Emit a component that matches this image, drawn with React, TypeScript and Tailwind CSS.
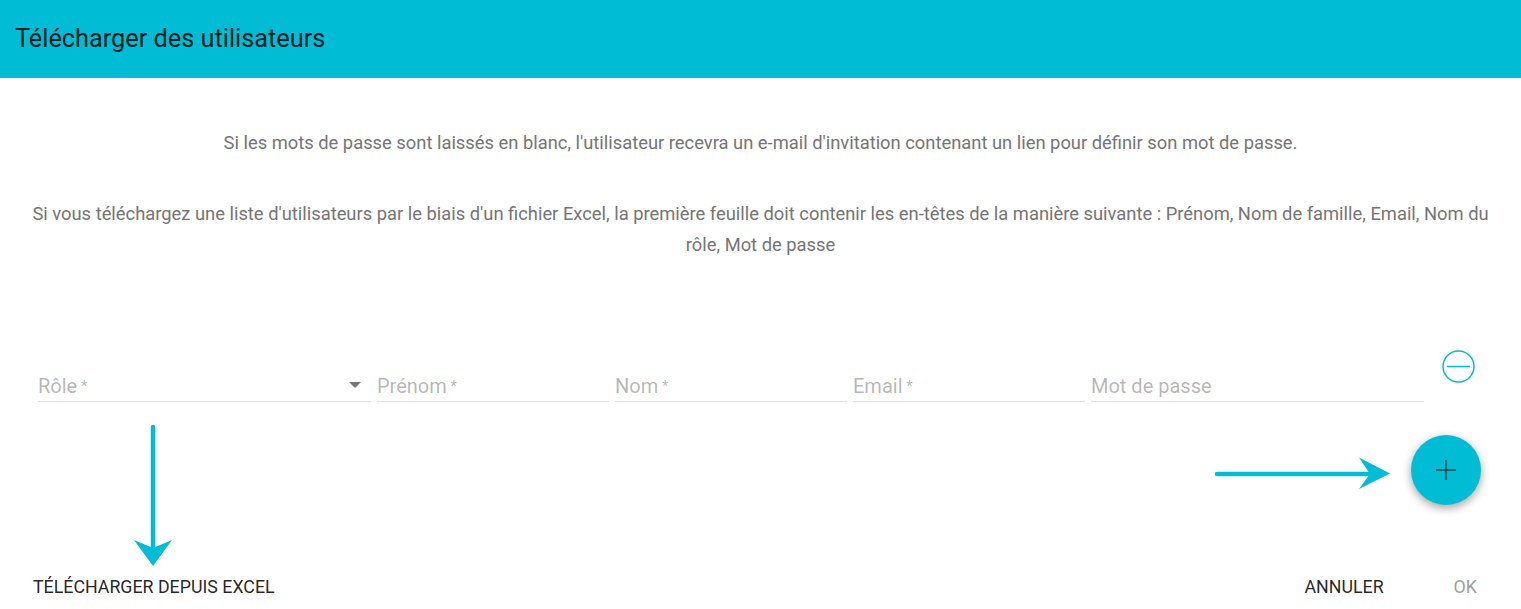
import React from 'react';

const fields = [
  { label: 'Rôle', required: true, w: 'w-[333px]', select: true },
  { label: 'Prénom', required: true, w: 'w-[232px]' },
  { label: 'Nom', required: true, w: 'w-[232px]' },
  { label: 'Email', required: true, w: 'w-[232px]' },
  { label: 'Mot de passe', required: false, w: 'w-[333px]' },
];

const App = () => {
  return (
    <div className="relative w-[1521px] h-[609px] overflow-hidden bg-white font-['Roboto',sans-serif]">
      <div className="h-[78px] bg-[#00bcd4] px-[15px] flex items-center">
        <h1 className="text-[25.3px] text-[rgba(0,0,0,0.87)] font-normal">Télécharger des utilisateurs</h1>
      </div>

      <div className="px-[24px] text-center text-[18.35px] leading-[31px] text-[#757575]">
        <p className="pt-[49px]">
          Si les mots de passe sont laissés en blanc, l'utilisateur recevra un e-mail d'invitation contenant un lien pour définir son mot de passe.
        </p>
        <p className="mt-[40px]">
          Si vous téléchargez une liste d'utilisateurs par le biais d'un fichier Excel, la première feuille doit contenir les en-têtes de la manière suivante : Prénom, Nom de famille, Email, Nom du rôle, Mot de passe
        </p>
      </div>

      <div className="mt-[88px] pl-[38px] flex items-start gap-[6px]">
        {fields.map((f) => (
          <div key={f.label} className={`${f.w} h-[54px] border-b border-[#e0e0e0] flex items-end justify-between pb-[3px]`}>
            <span className="text-[20px] leading-[24px] text-[rgba(0,0,0,0.3)]">
              {f.label}
              {f.required && <span className="text-[15px] align-top"> *</span>}
            </span>
            {f.select && (
              <svg width="12" height="6" viewBox="0 0 12 6" className="mb-[10px] mr-[10px]">
                <path d="M0 0 L12 0 L6 6 Z" fill="#757575" />
              </svg>
            )}
          </div>
        ))}
        <button className="ml-[12px] mt-[2px] w-[33px] h-[33px]">
          <svg width="33" height="33" viewBox="0 0 33 33">
            <circle cx="16.5" cy="16.5" r="15.5" fill="none" stroke="#00bcd4" strokeWidth="1.5" />
            <line x1="5" y1="16.5" x2="28" y2="16.5" stroke="#00bcd4" strokeWidth="1.5" />
          </svg>
        </button>
      </div>

      <div className="mt-[33px] pr-[40px] flex justify-end">
        <button className="w-[70px] h-[70px] rounded-full bg-[#00bcd4] flex items-center justify-center shadow-[0_3px_10px_rgba(0,0,0,0.16),0_3px_10px_rgba(0,0,0,0.23)]">
          <svg width="22" height="22" viewBox="0 0 22 22">
            <line x1="1" y1="11" x2="21" y2="11" stroke="#1f3b40" strokeWidth="1.4" />
            <line x1="11" y1="1" x2="11" y2="21" stroke="#1f3b40" strokeWidth="1.4" />
          </svg>
        </button>
      </div>

      <div className="mt-[64px] pl-[33px] pr-[44px] flex items-center justify-between h-[36px] text-[17.8px] text-[rgba(0,0,0,0.87)]">
        <button className="uppercase">Télécharger depuis Excel</button>
        <div className="flex items-center gap-[70px]">
          <button className="uppercase">Annuler</button>
          <button className="uppercase text-[#9e9e9e]">OK</button>
        </div>
      </div>

      {/* annotation arrows */}
      <svg className="absolute left-[128px] top-[424px]" width="50" height="146" viewBox="0 0 50 146">
        <line x1="25" y1="3" x2="25" y2="128" stroke="#00bcd4" strokeWidth="4.5" strokeLinecap="round" />
        <path d="M6 116 L25 124 L44 116 L25 142 Z" fill="#00bcd4" />
      </svg>
      <svg className="absolute left-[1212px] top-[452px]" width="182" height="44" viewBox="0 0 182 44">
        <line x1="5" y1="22" x2="160" y2="22" stroke="#00bcd4" strokeWidth="4.5" strokeLinecap="round" />
        <path d="M147 5.5 L158 22 L147 37 L178 21.5 Z" fill="#00bcd4" />
      </svg>
    </div>
  );
};

export default App;
